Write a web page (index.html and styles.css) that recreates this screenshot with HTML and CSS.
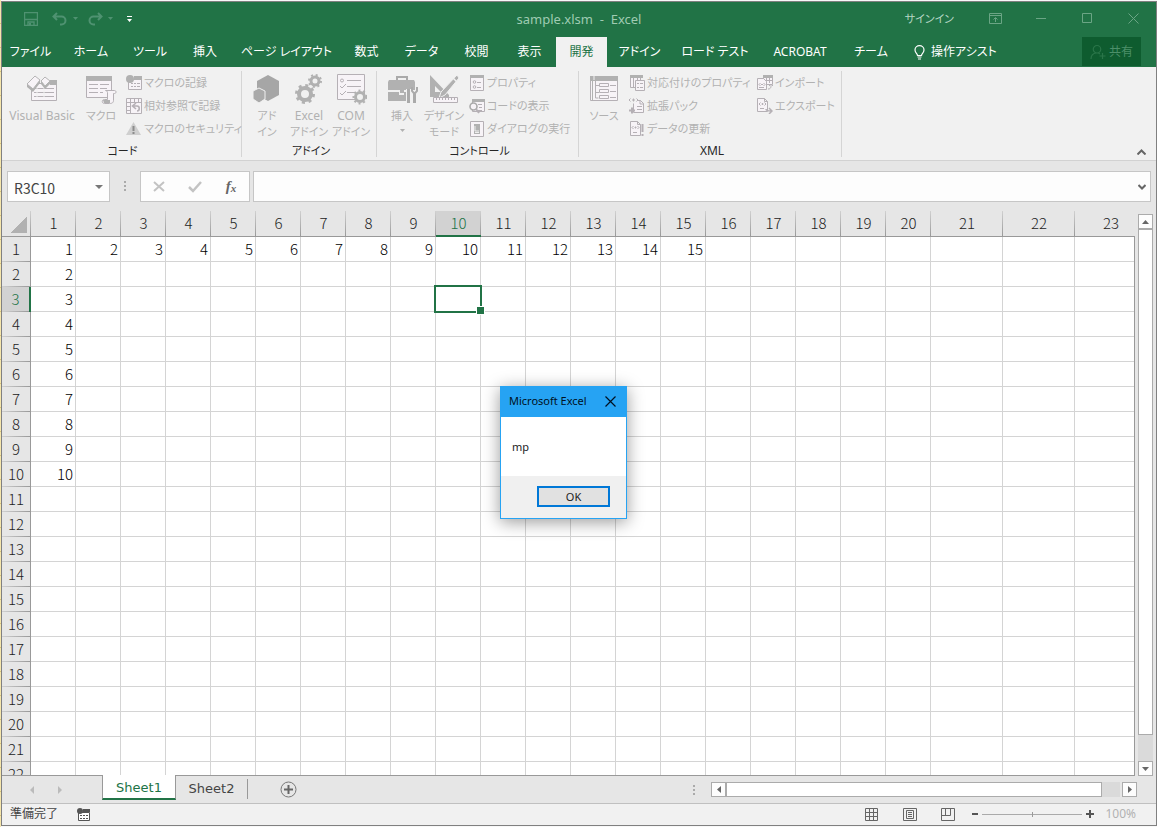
FILE: index.html
```html
<!DOCTYPE html>
<html lang="ja">
<head>
<meta charset="utf-8">
<title>sample.xlsm - Excel</title>
<link rel="stylesheet" href="styles.css">
</head>
<body>
<main class="window">
  <header class="titlebar">
    <div class="quick">
      <button class="tb-btn dim" aria-label="上書き保存"><svg width="14" height="14" viewBox="0 0 14 14"><path d="M.5.5h13v13H.5zM1 7.500h12M4 13.500V10h6v3.500" fill="none" stroke="currentColor" stroke-width="1.400"/><path d="M5 11h2v2.500H5z" fill="currentColor"/></svg></button>
      <button class="tb-btn dim undo" aria-label="元に戻す"><svg width="15" height="14" viewBox="0 0 15 14"><path d="M5 1 1.500 4.500 5 8M2 4.500h7.500a3.700 3.700 0 0 1 0 8H8" fill="none" stroke="currentColor" stroke-width="2"/></svg></button>
      <svg class="dim" width="5" height="3"><path d="M0 0h5L2.500 3z" fill="currentColor"/></svg>
      <button class="tb-btn dim redo" aria-label="やり直し"><svg width="15" height="14" viewBox="0 0 15 14"><path d="M10 1l3.500 3.500L10 8M13 4.500H5.500a3.700 3.700 0 0 0 0 8H7" fill="none" stroke="currentColor" stroke-width="2"/></svg></button>
      <svg class="dim" width="5" height="3"><path d="M0 0h5L2.500 3z" fill="currentColor"/></svg>
      <button class="tb-btn custom" aria-label="カスタマイズ"><svg width="5" height="6"><path d="M0 0h5v1H0zM0 3h5L2.500 6z" fill="currentColor"/></svg></button>
    </div>
    <h1 class="title">sample.xlsm&nbsp; -&nbsp; Excel</h1>
    <div class="sys">
      <a class="signin" href="#">サインイン</a>
      <button class="sysbtn" aria-label="リボンの表示オプション"><svg width="13" height="11"><path d="M.5.5h12v10H.5zM1 2.500h11M6.500 9V5M4.500 6.500l2-2 2 2" fill="none" stroke="currentColor"/></svg></button>
      <button class="sysbtn" aria-label="最小化"><svg width="11" height="11"><path d="M0 5.500h10" stroke="currentColor"/></svg></button>
      <button class="sysbtn" aria-label="最大化"><svg width="11" height="11"><path d="M.5.5h9v9h-9z" fill="none" stroke="currentColor"/></svg></button>
      <button class="sysbtn" aria-label="閉じる"><svg width="11" height="11"><path d="M.5.5l10 10M10.500.5l-10 10" stroke="currentColor"/></svg></button>
    </div>
  </header>

  <nav class="tabs">
    <div class="tablist">
      <button class="tab">ファイル</button><button class="tab">ホーム</button><button class="tab">ツール</button><button class="tab">挿入</button><button class="tab">ページ レイアウト</button><button class="tab">数式</button><button class="tab">データ</button><button class="tab">校閲</button><button class="tab">表示</button><button class="tab active">開発</button><button class="tab">アドイン</button><button class="tab">ロード テスト</button><button class="tab">ACROBAT</button><button class="tab">チーム</button>
    </div>
    <button class="assist"><svg width="11" height="15" viewBox="0 0 11 15"><path d="M3.500 10.500C3.500 8.500 1 8 1 5a4.500 4.300 0 0 1 9 0c0 3-2.500 3.500-2.500 5.500zM3.500 12h4M4 14h3" fill="none" stroke="currentColor" stroke-width="1.200"/></svg>操作アシスト</button>
    <button class="share"><svg width="16" height="16" viewBox="0 0 16 16"><path d="M7 1.500a3.500 3.500 0 0 1 0 7.500 3.500 3.500 0 0 1 0-7.500zM1 15c0-3 2-5.500 5-6M8.500 9l1.500 1M12.500 9v6M9.500 12h6" fill="none" stroke="currentColor" stroke-width="1.200"/></svg>共有</button>
  </nav>

  <section class="ribbon">
    <div class="group g-code">
      <div class="tools">
        <button class="large wide"><svg width="32" height="32" viewBox="0 0 32 32"><path d="M5.500 9.500h25v17h-25z" class="pale"/><path d="M24 6h7v5h-7z" class="solid"/><path d="M8 14.500h20M8 18.500h20M8 22.500h20" class="line"/><path d="M11 14v9M18 14v9" stroke="#f1f1f1"/><path d="M1 10 9 2l5 4-7 9zM15 7l4-4 5 4-5 5z" fill="#f7f3f7" stroke="#b5b5b5"/><path d="M1 10l6 5 7-9v3l-7 9-6-5zM15 7l4 5 5-5v3l-5 5-4-5z" class="solid"/></svg><span class="latin">Visual Basic</span></button>
        <button class="large"><svg width="32" height="32" viewBox="0 0 32 32"><path d="M1.500 3.500h25v20h-25z" class="pale"/><path d="M1 2h26v5H1z" class="solid"/><path d="M4 10.500h9M15 10.500h9M4 14.500h9M15 14.500h7M4 18.500h9M15 18.500h3" class="line"/><path d="M20.500 16.500h9c2 0 2 3 0 3h-1v7c0 3-3 3-4 3h-5c-3 0-3-4 0-4h3v-7c0-1-1-2-2-2z" class="pale"/><path d="M18 26h7v3h-6z" class="solid"/></svg><span>マクロ</span></button>
        <div class="stack">
          <button class="small"><svg width="16" height="16"><path d="M2.500 4.500h13v10h-13z" class="pale"/><path d="M8 1h8v4H8z" class="solid"/><circle cx="4" cy="4" r="4" class="solid"/><path d="M5 8.500h2M8 8.500h2M11 8.500h3M5 11.500h2M8 11.500h2M11 11.500h3" class="line"/></svg>マクロの記録</button>
          <button class="small"><svg width="16" height="16"><path d="M.5.5h15v15H.5zM.5 4.500h15M4.500 0v16M8.500 0v4M12.500 0v4M0 8.500h4M0 12.500h4" class="pale"/><path d="M10 5 6.500 8l3.500 3M7 8h4c3 0 3 5 0 5" class="line" stroke-width="1.600"/></svg>相対参照で記録</button>
          <button class="small"><svg width="16" height="16"><path d="M7.500 1 15 14H0z" class="soft"/><path d="M7.500 5v5M7.500 11v2" stroke="#8c8c8c" stroke-width="2"/></svg>マクロのセキュリティ</button>
        </div>
      </div>
      <h2 class="caption">コード</h2>
    </div>
    <div class="group g-addin">
      <div class="tools">
        <button class="large"><svg width="32" height="32" viewBox="0 0 32 32"><path d="M17 1l11 6v14l-11 6-11-6V7z" class="dark"/><path d="M8 14l6 3v8l-6 4-6-4v-8z" fill="#aaa" stroke="#f1f1f1"/></svg><span>アド<br>イン</span></button>
        <button class="large"><svg width="32" height="32" viewBox="0 0 32 32"><circle cx="12" cy="20" r="6" class="ring4"/><circle cx="12" cy="20" r="8.500" class="teeth"/><circle cx="22" cy="7" r="4" class="ring3"/><circle cx="22" cy="7" r="6" class="teeth small-teeth"/></svg><span><span class="latin">Excel</span><br>アドイン</span></button>
        <button class="large"><svg width="32" height="32" viewBox="0 0 32 32"><path d="M2.500.5h27v25h-27z" class="pale"/><circle cx="7" cy="6.500" r="1.500" class="pale"/><path d="M12 6.500h14M12 12.500h14M12 18.500h8M5 12l2 2 4-4M5 19l2 2 4-4" class="line"/><circle cx="25" cy="23" r="4.500" class="ring3"/><circle cx="25" cy="23" r="6.500" class="teeth small-teeth"/></svg><span><span class="latin">COM</span><br>アドイン</span></button>
      </div>
      <h2 class="caption">アドイン</h2>
    </div>
    <div class="group g-control">
      <div class="tools">
        <button class="large"><svg width="32" height="32" viewBox="0 0 32 32"><path d="M11 6V3h10v3" fill="none" stroke="#aaa" stroke-width="2"/><path d="M3 6h25l1 2v8H2V8zM2 18h11v3h5v-3h11v9H2z" class="solid"/><path d="M14 15h4v4h-4z" class="solid"/><path d="M20 15v14h7V15z" fill="#f1f1f1"/><path d="M22.500 15v6M22.500 21v8M28.500 20v9" stroke="#aaa" stroke-width="3"/><path d="M26 13v4l2.500 3 2.500-3v-4" fill="none" stroke="#aaa" stroke-width="2"/></svg><span>挿入</span><svg class="caret" width="5" height="3"><path d="M0 0h5L2.500 3z" fill="currentColor"/></svg></button>
        <button class="large"><svg width="32" height="32" viewBox="0 0 32 32"><path d="M2 1l19 20v2H2zM7 12v6h6z" class="solid" fill-rule="evenodd"/><path d="M29 1 13 18l-2 6 6-3L31 4z" class="solid" stroke="#f1f1f1"/><path d="M25 4l4 4" stroke="#f1f1f1" stroke-width="1.500"/><path d="M5.500 23.500h24v5h-24zM8.500 24v2M11.500 24v2M14.500 24v2M17.500 24v2M20.500 24v2M23.500 24v2M26.500 24v2" class="pale"/></svg><span>デザイン<br>モード</span></button>
        <div class="stack">
          <button class="small"><svg width="16" height="16"><path d="M1.500 1.500h13v14h-13z" class="pale"/><path d="M1 0h14v3H1z" class="solid"/><circle cx="5.500" cy="7" r="1.300" class="pale"/><circle cx="5.500" cy="12" r="1.300" class="pale"/><path d="M8 7.500h4M8 12.500h4" class="line"/></svg>プロパティ</button>
          <button class="small"><svg width="16" height="16"><path d="M3.500 1.500h12v12h-12z" class="pale"/><path d="M3 1h13v3H3z" class="solid"/><path d="M9 6.500h4M10 9.500h3M9 12.500h4" class="line"/><circle cx="4.500" cy="8.500" r="3.500" fill="#f7f3f7" stroke="#aaa" stroke-width="1.600"/><path d="M7 11l3 4" class="line" stroke-width="2"/></svg>コードの表示</button>
          <button class="small"><svg width="16" height="16"><path d="M1.500.5h13v15h-13z" class="pale"/><path d="M5 3h6v10H5zM7 0h2v1H7zM7 15h2v1H7z" class="solid"/><path d="M6 11.500h4M6 5v5h4" stroke="#eee" fill="none"/></svg>ダイアログの実行</button>
        </div>
      </div>
      <h2 class="caption">コントロール</h2>
    </div>
    <div class="group g-xml">
      <div class="tools">
        <button class="large"><svg width="32" height="32" viewBox="0 0 32 32"><path d="M2.500 3.500h27v23h-27z" class="pale"/><path d="M2 2h28v5H2zM4 7h1v20H4z" class="solid"/><path d="M6 2v4" stroke="#f1f1f1"/><path d="M7.500 7v17h3M8 11.500h3M8 18.500h3M22 11.500h6M22 17.500h6M22 23.500h6" class="line"/><path d="M11.500 9.500h9v3h-9zM11.500 15.500h9v3h-9zM11.500 21.500h9v3h-9z" class="pale"/></svg><span>ソース</span></button>
        <div class="stack map">
          <button class="small"><svg width="16" height="16"><path d="M1.500 1.500h10v11h-10zM4.500 3v9M8.500 3v9" class="pale"/><path d="M1 0h13v3H1z" class="solid"/><path d="M6.500 5.500h9v10h-9z" class="pale"/><path d="M8 8.500h2M11 8.500h3M8 12.500h2M11 12.500h3" class="line"/></svg>対応付けのプロパティ</button>
          <button class="small"><svg width="16" height="16"><path d="M4.500 5.500v9h10v-9l-3-3H9" class="pale"/><path d="M8 8.500h5M8 11.500h5M11 2v4h4" class="line"/><path d="M0 12.500h6M3 9.500v6" class="line" stroke-width="2"/><path d="M1.500.5 0 2l1.500 1.500M7.500.5 9 2 7.500 3.500M3 2h3M4.500.5v3" class="line"/></svg>拡張パック</button>
          <button class="small"><svg width="16" height="16"><path d="M1.500.5h7l3 3v11h-10zM8.500.5v3h3" class="pale"/><path d="M4.500 5 3 6.500 4.500 8M8.500 5 10 6.500 8.500 8M5.500 6.500h2M6.500 5.500v2M4 11.500h4" class="line"/><path d="M13.500 3v8M13.500 13v2" class="line" stroke-width="2"/></svg>データの更新</button>
        </div>
        <div class="stack">
          <button class="small"><svg width="16" height="16"><path d="M6.500 1.500h9v8h-9z" class="pale"/><path d="M6 0h10v3H6z" class="solid"/><path d="M9.500 3v5M12.500 3v5M7 5.500h9" class="line"/><path d="M.5 3.500h6l3 3v8h-9z" class="pale"/><path d="M3.500 8 2 9.500 3.500 11M6.500 8 8 9.500 6.500 11M4 9.500h2M2 12.500h5M11 14c3 0 3-2 3-4M12 11l2-2 2 2" class="line"/></svg>インポート</button>
          <button class="small"><svg width="16" height="16"><path d="M.5.5h7l3 3v10h-10zM7.500.5v3h3" class="pale"/><path d="M3.500 4.500 2 6l1.500 1.500M7.500 4.500 9 6 7.500 7.500M4.500 6h2M5.500 5v2M3 10.500h4" class="line"/><path d="M9 11c0 2 2 2 5 2M12 10l3 3-3 3" class="line" stroke-width="1.500"/></svg>エクスポート</button>
        </div>
      </div>
      <h2 class="caption latin">XML</h2>
    </div>
    <button class="collapse" aria-label="リボンを折りたたむ"><svg width="9" height="6"><path d="M.5 5.500l4-4 4 4" fill="none" stroke="#666" stroke-width="2"/></svg></button>
  </section>

  <section class="formula">
    <div class="namebox"><input type="text" aria-label="名前ボックス" value="R3C10"><button aria-label="名前の一覧"><svg width="8" height="4"><path d="M0 0h8L4 4z" fill="#777"/></svg></button></div>
    <svg class="grip" width="2" height="10"><path d="M0 0h2v2H0zM0 4h2v2H0zM0 8h2v2H0z" fill="#aaa"/></svg>
    <div class="fx">
      <button aria-label="キャンセル"><svg width="12" height="12"><path d="M1 1l10 9M11 1 1 10" stroke="#c3c3c3" stroke-width="2"/></svg></button>
      <button aria-label="入力"><svg width="14" height="12"><path d="M1 6l4 4 8-9" fill="none" stroke="#c3c3c3" stroke-width="2.500"/></svg></button>
      <button class="fn" aria-label="関数の挿入">f<small>x</small></button>
    </div>
    <div class="formula-field"><input type="text" aria-label="数式バー"><button aria-label="数式バーの展開"><svg width="8" height="6"><path d="M.5 1l3.500 3.500L7.500 1" fill="none" stroke="#666" stroke-width="2"/></svg></button></div>
  </section>

  <section class="sheet">
    <div class="grid-view"><table class="grid" id="grid"></table></div>
    <div class="vscroll">
      <button aria-label="上へ"><svg width="7" height="4"><path d="M0 4h7L3.500 0z" fill="#666"/></svg></button>
      <div class="thumb"></div>
      <button aria-label="下へ"><svg width="7" height="4"><path d="M0 0h7L3.500 4z" fill="#666"/></svg></button>
    </div>
  </section>

  <section class="sheetbar">
    <div class="sheetnav">
      <button aria-label="前のシート"><svg width="4" height="8"><path d="M4 0v8L0 4z" fill="#bbb"/></svg></button>
      <button aria-label="次のシート"><svg width="4" height="8"><path d="M0 0v8l4-4z" fill="#bbb"/></svg></button>
    </div>
    <button class="sheettab current">Sheet1</button>
    <button class="sheettab">Sheet2</button>
    <button class="addsheet" aria-label="新しいシート"><svg width="17" height="17"><circle cx="8.500" cy="8.500" r="7.500" fill="none" stroke="#777"/><path d="M4 8.500h9M8.500 4v9" stroke="#666" stroke-width="2"/></svg></button>
    <svg class="grip" width="2" height="10"><path d="M0 0h2v2H0zM0 4h2v2H0zM0 8h2v2H0z" fill="#aaa"/></svg>
    <div class="hscroll">
      <button aria-label="左へ"><svg width="4" height="7"><path d="M4 0v7L0 3.500z" fill="#666"/></svg></button>
      <div class="thumb"></div>
      <button aria-label="右へ"><svg width="4" height="7"><path d="M0 0v7l4-3.500z" fill="#666"/></svg></button>
    </div>
  </section>

  <footer class="status">
    <span class="ready">準備完了</span>
    <button aria-label="マクロの記録"><svg width="14" height="13"><path d="M1.500 4.500h11v8h-11z" fill="#fff" stroke="#555"/><path d="M6 1h7v3H6z" fill="#555"/><circle cx="3" cy="3" r="3" fill="#555"/><path d="M3 7.500h2M6 7.500h2M9 7.500h2M3 10.500h2M6 10.500h2M9 10.500h2" stroke="#555"/></svg></button>
    <div class="views">
      <button aria-label="標準"><svg width="14" height="13"><path d="M.5.5h12v12H.5zM4.500 0v13M8.500 0v13M0 4.500h13M0 8.500h13" fill="none" stroke="#666"/></svg></button>
      <button aria-label="ページ レイアウト"><svg width="14" height="13"><path d="M.5.5h13v12H.5zM3.500 2.500h7v8h-7zM5 4.500h4M5 6.500h4M5 8.500h4" fill="none" stroke="#666"/></svg></button>
      <button aria-label="改ページ プレビュー"><svg width="14" height="13"><path d="M.5.5h13v12H.5zM4.500 0v7.500M9.500 0v7.500M0 7.500h9.500" fill="none" stroke="#666"/></svg></button>
    </div>
    <div class="zoomer">
      <button aria-label="縮小"><svg width="6" height="8"><path d="M0 4h6" stroke="#555" stroke-width="2"/></svg></button>
      <input type="range" aria-label="ズーム" min="0" max="100" value="50">
      <button aria-label="拡大"><svg width="8" height="8"><path d="M0 4h8M4 0v8" stroke="#555" stroke-width="2"/></svg></button>
    </div>
    <span class="percent">100%</span>
  </footer>
</main>

<div class="dialog" role="dialog" aria-labelledby="dlg-title">
  <div class="dlg-head"><h2 id="dlg-title">Microsoft Excel</h2><button aria-label="閉じる"><svg width="11" height="11"><path d="M.5.5l10 10M10.500.5l-10 10" stroke="#012" stroke-width="1.200"/></svg></button></div>
  <p class="dlg-body">mp</p>
  <div class="dlg-foot"><button>OK</button></div>
</div>
<script src="grid.js"></script>
</body>
</html>
```
FILE: grid.js
```js
const COLS = 23, ROWS = 22, SEL_ROW = 3, SEL_COL = 10;
const range = n => Array.from({ length: n }, (_, i) => i + 1);

function cellValue(r, c) {
  if (r === 1 && c <= 15) return c;
  if (c === 1 && r <= 10) return r;
  return '';
}

const head = range(COLS).map(c =>
  `<th scope="col" class="${c === SEL_COL ? 'selected' : ''}">${c}</th>`).join('');
const body = range(ROWS).map(r => {
  const cells = range(COLS).map(c =>
    r === SEL_ROW && c === SEL_COL
      ? '<td class="cursor"><span class="frame"></span></td>'
      : `<td>${cellValue(r, c)}</td>`).join('');
  return `<tr><th scope="row" class="${r === SEL_ROW ? 'selected' : ''}">${r}</th>${cells}</tr>`;
}).join('');

document.getElementById('grid').innerHTML =
  `<colgroup><col class="c-head"><col span="20" class="c-std"><col span="3" class="c-wide"></colgroup>` +
  `<thead><tr><td class="corner"></td>${head}</tr></thead><tbody>${body}</tbody>`;
```
FILE: styles.css
```css
* { box-sizing: border-box; }
body {
  margin: 0;
  padding: 1px 0 1px 1px;
  height: 100vh;
  background: repeating-linear-gradient(#f6e6ab 0 23px, #dcc67c 23px 24px) left / 1px 100% no-repeat #f8f8f8;
  font: 12px/16px "Noto Sans", "Noto Sans CJK JP", sans-serif;
  font-feature-settings: "palt";
  color: #262626;
  overflow: hidden;
}
button, input { font: inherit; color: inherit; font-feature-settings: inherit; }
button { border: 0; padding: 0; margin: 0; background: none; display: flex; align-items: center; justify-content: center; white-space: nowrap; }
input { border: 0; padding: 0; background: none; min-width: 0; outline: 0; }
h1, h2, p { margin: 0; font-size: inherit; font-weight: 400; }
svg { display: block; flex: none; }

.window { height: 100%; display: flex; flex-direction: column; border: 1px solid #808080; background: #e6e6e6; }

.titlebar { flex: none; height: 35px; padding-bottom: 2px; display: grid; grid-template-columns: 1fr auto 1fr; align-items: center; background: #217346; color: #fff; }
.quick { display: flex; align-items: center; padding-left: 22px; }
.dim { color: #4f9271; }
.undo { margin: 0 6px 0 14px; }
.redo { margin: 0 5px 0 10px; }
.custom { margin-left: 14px; }
.title { font-size: 13px; color: #9fcbb2; }
.sys { display: flex; align-items: center; justify-content: flex-end; color: #6ba585; }
.signin { color: #b5d6c3; text-decoration: none; margin-right: 18px; font-size: 11px; }
.sysbtn { width: 46px; height: 30px; }

.tabs { flex: none; height: 30px; display: flex; background: #217346; color: #fff; padding-right: 15px; }
.tablist { display: grid; grid-template-columns: 57px 64px 54px 56px 107px 53px 57px 53px 53px 51px 65px 86px 84px 58px; }
.tab.active { background: #f1f1f1; color: #217346; }
.assist { margin-left: 14px; gap: 6px; }
.share { margin-left: auto; width: 59px; height: 29px; gap: 3px; background: #0e5c2f; color: #4c8f69; }
.share svg { color: #2a7549; }

.ribbon { flex: none; display: flex; height: 94px; background: #f1f1f1; border-bottom: 1px solid #d2d2d2; color: #b1b1b1; padding-top: 4px; font-size: 11px; }
.group { flex: none; display: flex; flex-direction: column; border-right: 1px solid #d5d5d5; margin-bottom: 3px; padding-left: 4px; }
.g-code { width: 240px; padding-left: 2px; }
.g-addin { width: 135px; }
.g-control { width: 202px; }
.g-xml { width: 263px; }
.tools { flex: none; display: flex; height: 74px; }
.caption { color: #262626; text-align: center; line-height: 12px; }
.latin { font-size: 12px; }
.large { flex: none; width: 42px; flex-direction: column; justify-content: flex-start; padding-top: 3px; gap: 2px; text-align: center; }
.large.wide { width: 76px; }
.caret { margin-top: 3px; }
.stack { flex: none; margin-left: 4px; }
.map { width: 128px; margin-right: -4px; }
.small { height: 23px; gap: 2px; }
.pale { fill: #f7f3f7; stroke: #b5b0b5; }
.solid { fill: #b1b1b1; }
.soft { fill: #cfcfcf; }
.dark { fill: #a6a6a6; }
.line { stroke: #b5b0b5; fill: none; }
.ring4 { fill: none; stroke: #b1b1b1; stroke-width: 4; }
.ring3 { fill: #f1f1f1; stroke: #b1b1b1; stroke-width: 3; }
.teeth { fill: none; stroke: #b1b1b1; stroke-width: 3; stroke-dasharray: 3 3.675; }
.small-teeth { stroke-width: 2; stroke-dasharray: 2 2.712; }
.collapse { margin: auto 10px 5px auto; }

.formula { flex: none; height: 50px; display: flex; align-items: flex-start; padding: 10px 5px 0; }
.namebox, .fx, .formula-field { height: 31px; background: #fdfdfd; border: 1px solid #c6c6c6; display: flex; align-items: center; }
.namebox { width: 103px; padding: 0 6px; font: 14px/20px "Noto Sans CJK JP", sans-serif; color: #444; }
.namebox input { flex: 1; padding-top: 2px; }
.formula .grip { margin: 10px 14px 0; }
.fx { width: 110px; }
.fx button { flex: 1; }
.fn { font: italic bold 15px/18px "Liberation Serif", serif; color: #666; padding-bottom: 2px; }
.fn small { font-size: 11px; padding-top: 4px; }
.formula-field { flex: 1; margin-left: 3px; padding-right: 4px; }
.formula-field input { flex: 1; height: 100%; }

.sheet { flex: 1; min-height: 0; display: flex; }
.grid-view { flex: 1; min-width: 0; position: relative; overflow: hidden; border-bottom: 1px solid #999; }
.grid-view::after { content: ""; position: absolute; top: 25px; right: 0; bottom: 0; width: 1px; background: #999; }
.grid { width: 1145px; table-layout: fixed; border-collapse: separate; border-spacing: 0; font: 300 15px/22px "Noto Sans CJK JP", sans-serif; color: #000; }
.c-head { width: 29px; }
.c-std { width: 45px; }
.c-wide { width: 72px; }
.grid th { font-weight: 300; padding: 0 0 2px; text-align: center; background: #e6e6e6; border: 0 solid #999; color: #222; }
.grid td { height: 25px; padding: 0 2px 1px 0; text-align: right; background: #fff; border: solid #d4d4d4; border-width: 0 1px 1px 0; }
.grid thead th, .grid thead .corner { height: 26px; border-bottom: 1px solid #999; background: linear-gradient(#d0d0d0, #999) right / 1px 100% no-repeat #e6e6e6; border-right: 0; }
.grid thead .corner { background: linear-gradient(135deg, transparent 50%, #b1b1b1 50%) 8px 5px / 17px 17px no-repeat, linear-gradient(#d0d0d0, #999) right / 1px 100% no-repeat #e6e6e6; }
.grid tbody th { border-right-width: 1px; background: linear-gradient(90deg, #d0d0d0, #999) bottom / 100% 1px no-repeat #e6e6e6; }
.grid thead th.selected { background-color: #d2d2d2; color: #217346; border-bottom: 2px solid #217346; padding-bottom: 1px; }
.grid tbody th.selected { background-color: #d2d2d2; color: #217346; border-right: 2px solid #217346; }
.cursor { position: relative; }
.frame { position: absolute; inset: -2px; border: 2px solid #217346; z-index: 1; }
.frame::after { content: ""; position: absolute; right: -5px; bottom: -4px; width: 7px; height: 7px; background: #217346; border: 1px solid #fff; }

.vscroll { flex: none; width: 15px; margin: 3px 3px 0; display: flex; flex-direction: column; background: #dadada; }
.vscroll button, .hscroll button { flex: none; width: 15px; height: 15px; background: #fdfdfd; border: 1px solid #ababab; }
.thumb { background: #fff; border: 1px solid #ababab; }
.vscroll .thumb { flex: 1; margin-bottom: 26px; }

.sheetbar { flex: none; height: 28px; display: flex; border-bottom: 1px solid #c0c0c0; font: 13px/16px "DejaVu Sans", sans-serif; color: #444; }
.sheetnav { width: 100px; display: flex; gap: 24px; padding-left: 28px; }
.sheettab { height: 25px; margin-top: -1px; min-width: 73px; }
.sheettab.current { min-width: 74px; padding-top: 3px; background: #fff; color: #217346; border: solid #999; border-width: 0 1px; border-bottom: 2px solid #217346; z-index: 1; }
.sheettab + .sheettab { margin-top: 3px; height: 20px; padding-bottom: 1px; border-right: 1px solid #999; min-width: 72px; }
.addsheet { margin-left: 32px; padding-bottom: 1px; }
.sheetbar .grip { margin: auto 16px auto auto; }
.hscroll { flex: 0 1 426px; margin: 6px 19px 6px 0; height: 15px; display: flex; background: linear-gradient(90deg, #dadada, #dadada) 0 0 / 409px 100% no-repeat; }
.hscroll .thumb { flex: 1; margin-right: 20px; }

.status { flex: none; height: 21px; display: flex; align-items: center; background: #f1f1f1; color: #444; padding: 0 20px 1px 8px; }
.ready { margin-right: 19px; }
.views { margin-left: auto; display: flex; gap: 24px; }
.zoomer { display: flex; align-items: center; gap: 4px; margin: 0 11px 0 17px; }
.percent { color: #b1b1b1; }
input[type="range"] { -webkit-appearance: none; appearance: none; width: 100px; height: 9px; margin: 0; background: linear-gradient(#aaa, #aaa) center / 100% 1px no-repeat; }
input[type="range"]::-webkit-slider-thumb { -webkit-appearance: none; width: 1px; height: 5px; background: #999; }

.dialog { position: absolute; left: 500px; top: 386px; width: 127px; background: #fff; border: 1px solid #26a3f3; box-shadow: 0 3px 16px rgba(0, 0, 0, .4); color: #222; font-size: 11px; z-index: 5; }
.dlg-head { height: 30px; display: flex; align-items: center; justify-content: space-between; padding: 0 10px 2px 8px; background: #26a3f3; color: #012; }
.dlg-body { padding: 22px 11px 21px; }
.dlg-foot { display: flex; justify-content: flex-end; padding: 10px 16px 11px; background: #f0f0f0; }
.dlg-foot button { width: 73px; height: 21px; background: #e1e1e1; border: 2px solid #0078d7; }
```
